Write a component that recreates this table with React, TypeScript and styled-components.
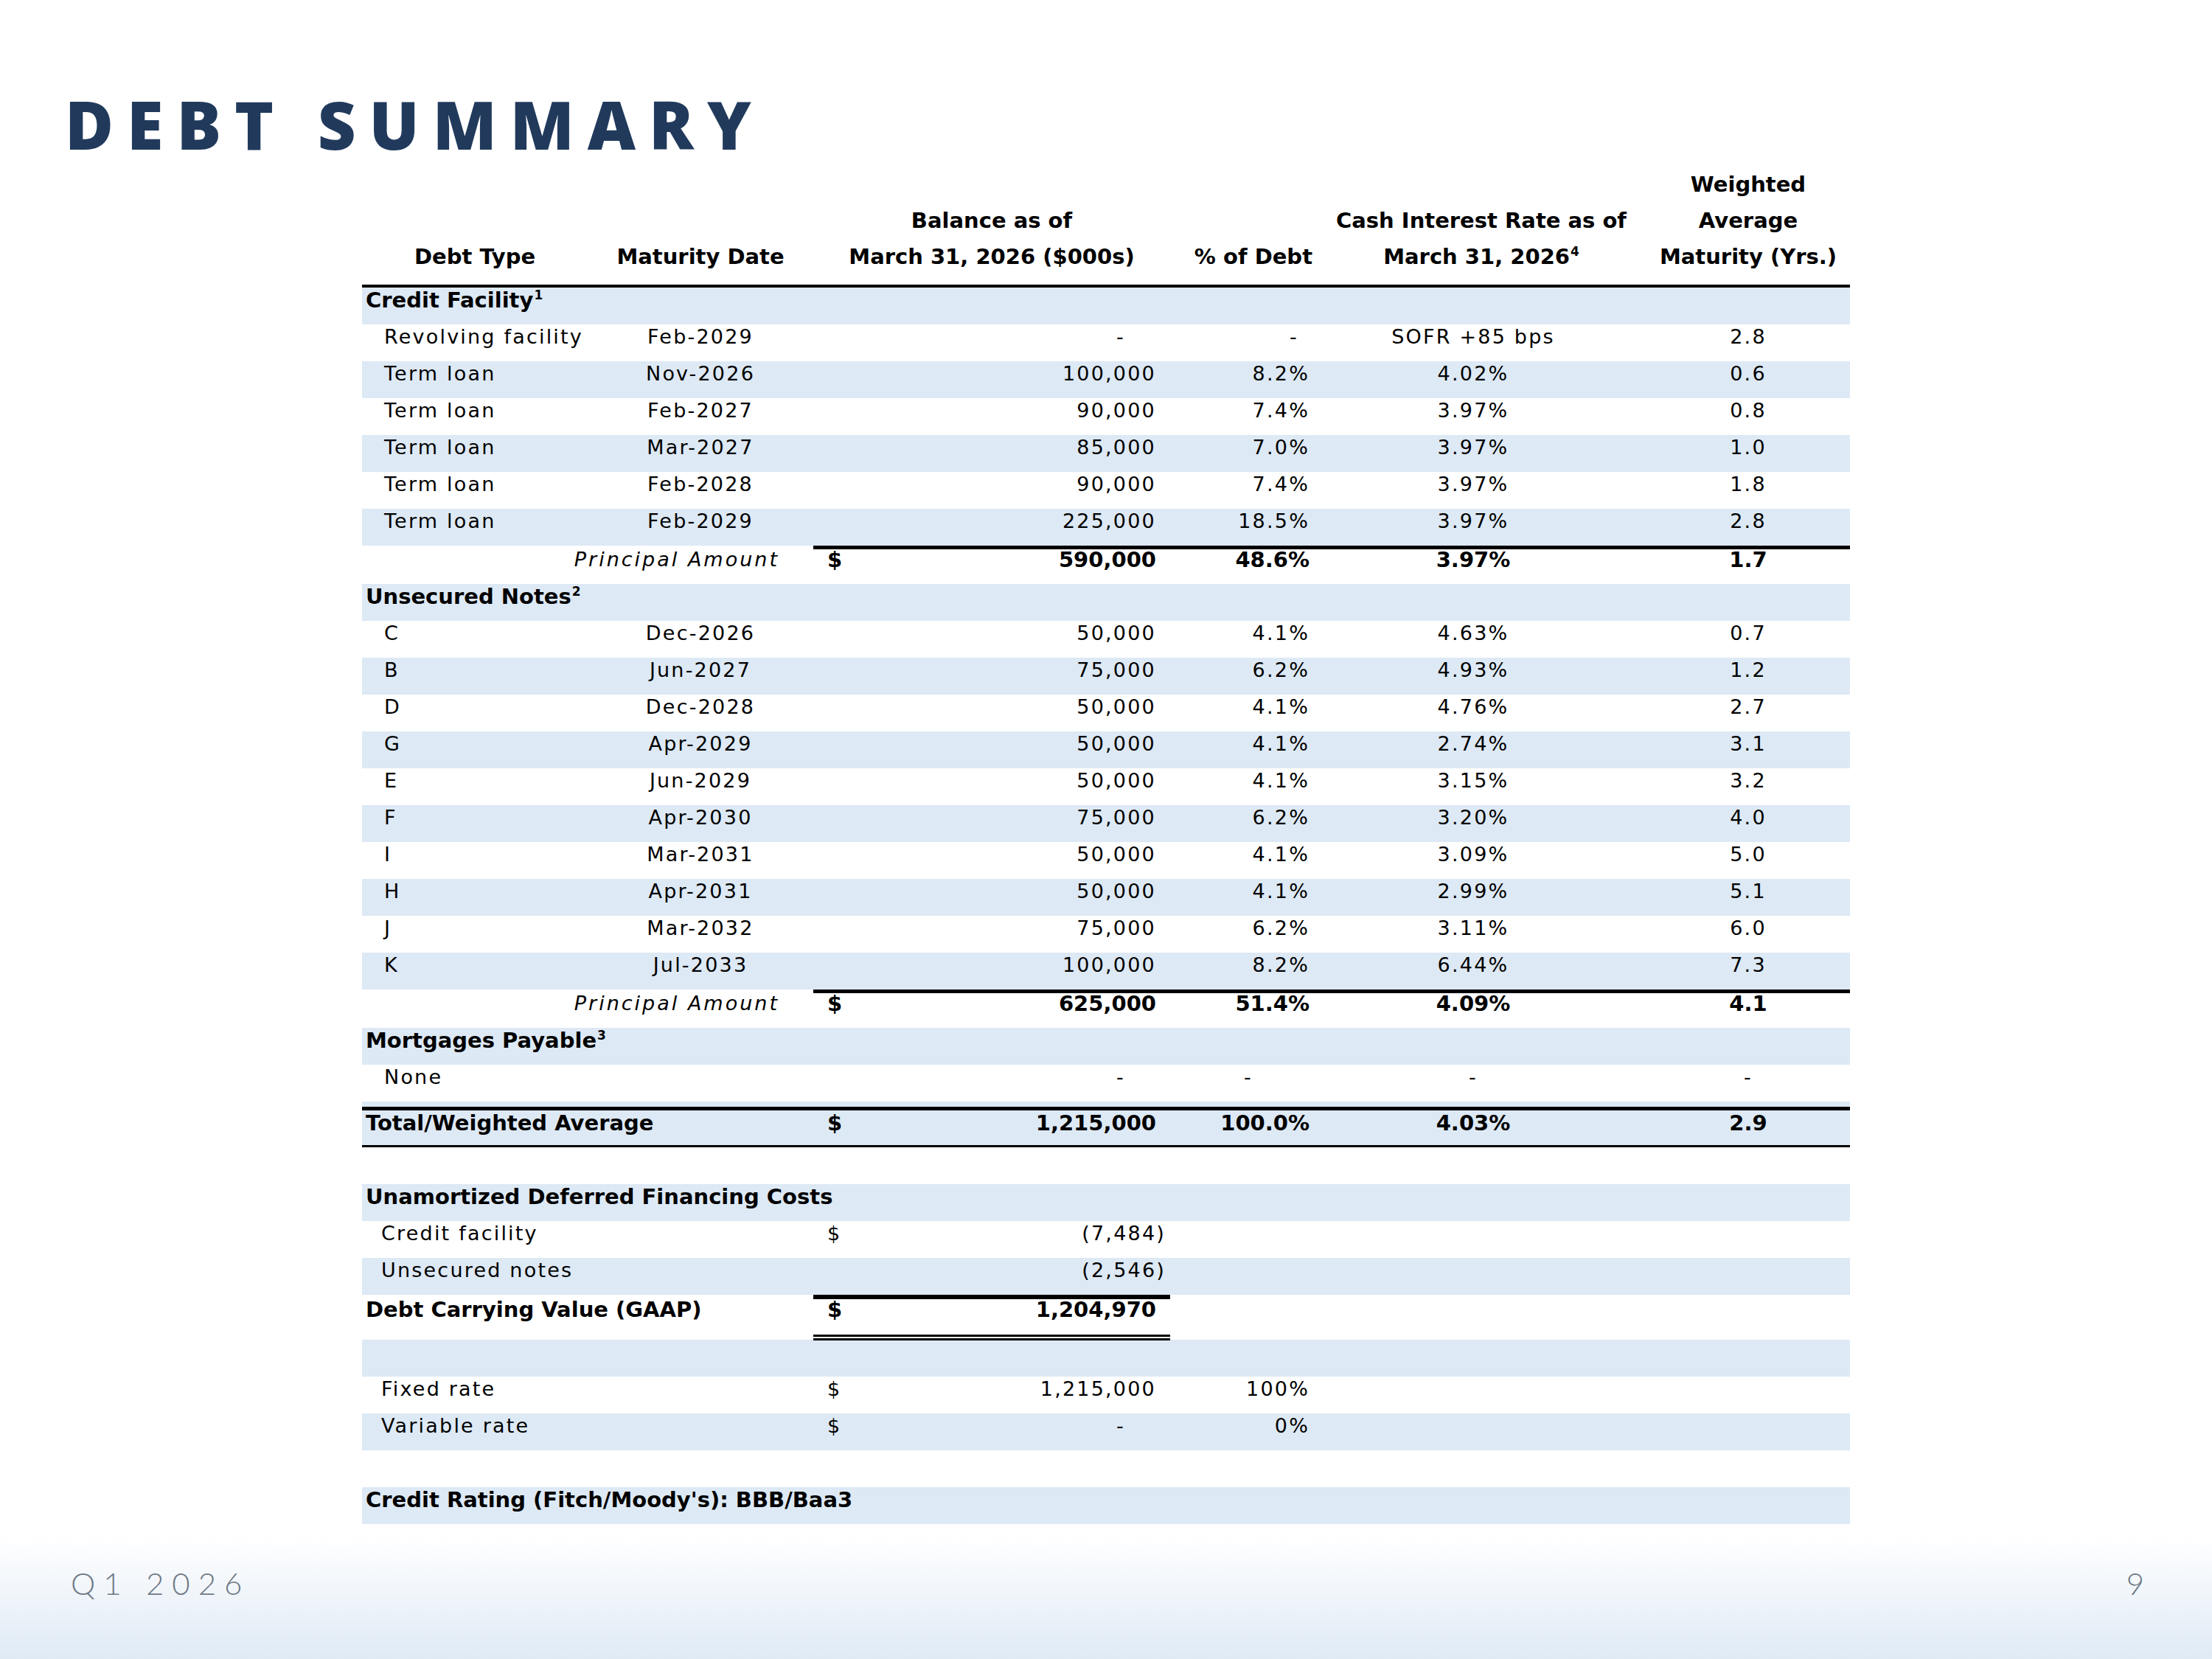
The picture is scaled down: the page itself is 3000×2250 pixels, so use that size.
import React, { FC, ReactElement, ReactNode } from 'react';
import styled, { createGlobalStyle, css } from 'styled-components';

const COLUMNS = '306px 306px 484px 212px 410px 300px';
const SHADE = '#dde9f5';

type Justify = 'flex-start' | 'center' | 'flex-end' | 'space-between';
type Rule = 'line' | 'ghost' | 'carry' | 'carryGhost';

interface DebtItem {
    label: string;
    date: string;
    balance: string;
    pct: string;
    rate: string;
    wam: string;
}

const creditFacility: DebtItem[] = [
    { label: 'Revolving facility', date: 'Feb-2029', balance: '-', pct: '-', rate: 'SOFR +85 bps', wam: '2.8' },
    { label: 'Term loan', date: 'Nov-2026', balance: '100,000', pct: '8.2%', rate: '4.02%', wam: '0.6' },
    { label: 'Term loan', date: 'Feb-2027', balance: '90,000', pct: '7.4%', rate: '3.97%', wam: '0.8' },
    { label: 'Term loan', date: 'Mar-2027', balance: '85,000', pct: '7.0%', rate: '3.97%', wam: '1.0' },
    { label: 'Term loan', date: 'Feb-2028', balance: '90,000', pct: '7.4%', rate: '3.97%', wam: '1.8' },
    { label: 'Term loan', date: 'Feb-2029', balance: '225,000', pct: '18.5%', rate: '3.97%', wam: '2.8' },
];

const unsecuredNotes: DebtItem[] = [
    { label: 'C', date: 'Dec-2026', balance: '50,000', pct: '4.1%', rate: '4.63%', wam: '0.7' },
    { label: 'B', date: 'Jun-2027', balance: '75,000', pct: '6.2%', rate: '4.93%', wam: '1.2' },
    { label: 'D', date: 'Dec-2028', balance: '50,000', pct: '4.1%', rate: '4.76%', wam: '2.7' },
    { label: 'G', date: 'Apr-2029', balance: '50,000', pct: '4.1%', rate: '2.74%', wam: '3.1' },
    { label: 'E', date: 'Jun-2029', balance: '50,000', pct: '4.1%', rate: '3.15%', wam: '3.2' },
    { label: 'F', date: 'Apr-2030', balance: '75,000', pct: '6.2%', rate: '3.20%', wam: '4.0' },
    { label: 'I', date: 'Mar-2031', balance: '50,000', pct: '4.1%', rate: '3.09%', wam: '5.0' },
    { label: 'H', date: 'Apr-2031', balance: '50,000', pct: '4.1%', rate: '2.99%', wam: '5.1' },
    { label: 'J', date: 'Mar-2032', balance: '75,000', pct: '6.2%', rate: '3.11%', wam: '6.0' },
    { label: 'K', date: 'Jul-2033', balance: '100,000', pct: '8.2%', rate: '6.44%', wam: '7.3' },
];

const GlobalStyle = createGlobalStyle`
    html, body {
        margin: 0;
        padding: 0;
        background: #ffffff;
    }

    * {
        box-sizing: border-box;
    }
`;

const Slide = styled.div`
    width: 3000px;
    height: 2250px;
    display: flex;
    flex-direction: column;
    background: #ffffff;
`;

const Title = styled.h1`
    margin: 0;
    padding: 123px 0 0 88px;
    font-family: 'Open Sans', 'Liberation Sans', sans-serif;
    font-weight: 800;
    font-size: 90px;
    line-height: 90px;
    letter-spacing: 18px;
    color: #213a5c;
`;

const Table = styled.div`
    width: 2018px;
    margin: 13px auto 0;
    font-family: 'DejaVu Sans', Verdana, sans-serif;
    color: #000000;
`;

const HeaderRow = styled.div`
    display: grid;
    grid-template-columns: ${COLUMNS};
    align-items: end;
    padding-bottom: 13px;
    border-bottom: 4px solid #000000;
`;

const HeadCell = styled.div<{ $align?: 'center' | 'right'; $padLeft?: number; $padRight?: number }>`
    text-align: ${({ $align }): string => $align ?? 'center'};
    padding-left: ${({ $padLeft }): number => $padLeft ?? 0}px;
    padding-right: ${({ $padRight }): number => $padRight ?? 0}px;
    font-weight: 700;
    font-size: 29px;
    line-height: 49px;
    white-space: nowrap;
`;

const Row = styled.div<{ $shaded?: boolean; $height?: number }>`
    display: grid;
    grid-template-columns: ${COLUMNS};
    height: ${({ $height }): number => $height ?? 50}px;
    background: ${({ $shaded }): string => ($shaded ? SHADE : '#ffffff')};
`;

const TotalBand = styled.div`
    background: ${SHADE};
    padding-top: 7px;

    ${Row} {
        border-top: 5px solid #000000;
        border-bottom: 3px solid #000000;
    }
`;

const rules: Record<Rule, ReturnType<typeof css>> = {
    line: css`
        border-top: 5px solid #000000;
    `,
    ghost: css`
        border-top: 5px solid transparent;
    `,
    carry: css`
        border-top: 6px solid #000000;
        border-bottom: 8px double #000000;
    `,
    carryGhost: css`
        border-top: 6px solid transparent;
        border-bottom: 8px solid transparent;
    `,
};

const Cell = styled.div<{
    $span?: number;
    $justify?: Justify;
    $bold?: boolean;
    $italic?: boolean;
    $padLeft?: number;
    $padRight?: number;
    $lift?: number;
    $rule?: Rule;
}>`
    grid-column: span ${({ $span }): number => $span ?? 1};
    display: flex;
    align-items: center;
    justify-content: ${({ $justify }): string => $justify ?? 'flex-start'};
    padding: 0 ${({ $padRight }): number => $padRight ?? 0}px ${({ $lift }): number => $lift ?? 16}px
        ${({ $padLeft }): number => $padLeft ?? 0}px;
    font-size: ${({ $bold }): number => ($bold ? 29 : 27)}px;
    line-height: 28px;
    font-weight: ${({ $bold }): number => ($bold ? 700 : 400)};
    font-style: ${({ $italic }): string => ($italic ? 'italic' : 'normal')};
    letter-spacing: ${({ $bold, $italic }): number => ($bold ? 0 : $italic ? 3 : 2.2)}px;
    white-space: nowrap;
    ${({ $rule }) => ($rule ? rules[$rule] : '')}
`;

const Sup = styled.sup`
    position: relative;
    top: -11px;
    font-size: 17px;
    line-height: 0;
    vertical-align: baseline;
    margin-left: 1px;
`;

const Footer = styled.footer`
    margin-top: auto;
    height: 165px;
    padding: 41px 92px 0 96px;
    display: flex;
    justify-content: space-between;
    align-items: flex-start;
    background: linear-gradient(180deg, #ffffff 0%, #dfeaf5 100%);
    font-family: Lato, 'Open Sans', sans-serif;
    font-weight: 300;
    font-size: 42px;
    line-height: 42px;
    color: #6f7985;
`;

const Period = styled.span`
    letter-spacing: 11px;
`;

const balancePad = (value: string): number => {
    if (value === '-') return 61;
    if (value.startsWith('(')) return 6;
    return 19;
};

const Money: FC<{ value: string; dollar?: boolean; bold?: boolean; rule?: Rule; lift?: number }> = ({
    value,
    dollar,
    bold,
    rule,
    lift,
}): ReactElement => (
    <Cell $justify="space-between" $padLeft={19} $padRight={balancePad(value)} $bold={bold} $rule={rule} $lift={lift}>
        <span>{dollar ? '$' : ''}</span>
        <span>{value}</span>
    </Cell>
);

const Section: FC<{ shaded: boolean; children: ReactNode }> = ({ shaded, children }): ReactElement => (
    <Row $shaded={shaded}>
        <Cell $span={6} $bold $padLeft={5}>
            <span>{children}</span>
        </Cell>
    </Row>
);

const ItemRow: FC<{ item: DebtItem; shaded: boolean }> = ({ item, shaded }): ReactElement => (
    <Row $shaded={shaded}>
        <Cell $padLeft={30}>{item.label}</Cell>
        <Cell $justify="center">{item.date}</Cell>
        <Money value={item.balance} />
        <Cell $justify="flex-end" $padRight={item.pct === '-' ? 38 : 23}>
            {item.pct}
        </Cell>
        <Cell $justify="center" $padRight={12}>
            {item.rate}
        </Cell>
        <Cell $justify="center" $padLeft={24}>
            {item.wam}
        </Cell>
    </Row>
);

// subtotal rows: rule over the number columns, text sits high under the rule
const PrincipalRow: FC<{ balance: string; pct: string; rate: string; wam: string }> = ({
    balance,
    pct,
    rate,
    wam,
}): ReactElement => (
    <Row $height={52}>
        <Cell $span={2} $justify="flex-end" $padRight={46} $italic $rule="ghost" $lift={19}>
            Principal Amount
        </Cell>
        <Money value={balance} dollar bold rule="line" lift={19} />
        <Cell $justify="flex-end" $padRight={23} $bold $rule="line" $lift={19}>
            {pct}
        </Cell>
        <Cell $justify="center" $padRight={12} $bold $rule="line" $lift={19}>
            {rate}
        </Cell>
        <Cell $justify="center" $padLeft={24} $bold $rule="line" $lift={19}>
            {wam}
        </Cell>
    </Row>
);

const SubRow: FC<{ label: string; shaded: boolean; value: string; dollar?: boolean; pct?: string }> = ({
    label,
    shaded,
    value,
    dollar,
    pct,
}): ReactElement => (
    <Row $shaded={shaded}>
        <Cell $span={2} $padLeft={26}>
            {label}
        </Cell>
        <Money value={value} dollar={dollar} />
        <Cell $justify="flex-end" $padRight={23}>
            {pct}
        </Cell>
    </Row>
);

const App: FC = (): ReactElement => (
    <>
        <GlobalStyle />
        <Slide>
            <Title>DEBT SUMMARY</Title>
            <Table>
                <HeaderRow>
                    <HeadCell>Debt Type</HeadCell>
                    <HeadCell>Maturity Date</HeadCell>
                    <HeadCell>
                        Balance as of
                        <br />
                        March 31, 2026 ($000s)
                    </HeadCell>
                    <HeadCell $align="right" $padRight={19}>
                        % of Debt
                    </HeadCell>
                    <HeadCell $padLeft={10}>
                        Cash Interest Rate as of
                        <br />
                        March 31, 2026<Sup>4</Sup>
                    </HeadCell>
                    <HeadCell $padLeft={24}>
                        Weighted
                        <br />
                        Average
                        <br />
                        Maturity (Yrs.)
                    </HeadCell>
                </HeaderRow>

                <Section shaded>
                    Credit Facility<Sup>1</Sup>
                </Section>
                {creditFacility.map((item, i) => (
                    <ItemRow key={`cf-${item.date}-${i}`} item={item} shaded={i % 2 === 1} />
                ))}
                <PrincipalRow balance="590,000" pct="48.6%" rate="3.97%" wam="1.7" />

                <Section shaded>
                    Unsecured Notes<Sup>2</Sup>
                </Section>
                {unsecuredNotes.map((item, i) => (
                    <ItemRow key={`un-${item.label}`} item={item} shaded={i % 2 === 1} />
                ))}
                <PrincipalRow balance="625,000" pct="51.4%" rate="4.09%" wam="4.1" />

                <Section shaded>
                    Mortgages Payable<Sup>3</Sup>
                </Section>
                <Row>
                    <Cell $span={2} $padLeft={30}>
                        None
                    </Cell>
                    <Money value="-" />
                    <Cell $justify="center">-</Cell>
                    <Cell $justify="center" $padRight={12}>
                        -
                    </Cell>
                    <Cell $justify="center" $padLeft={24}>
                        -
                    </Cell>
                </Row>

                <TotalBand>
                    <Row $shaded $height={55}>
                        <Cell $span={2} $bold $padLeft={5} $lift={14}>
                            Total/Weighted Average
                        </Cell>
                        <Money value="1,215,000" dollar bold lift={14} />
                        <Cell $justify="flex-end" $padRight={23} $bold $lift={14}>
                            100.0%
                        </Cell>
                        <Cell $justify="center" $padRight={12} $bold $lift={14}>
                            4.03%
                        </Cell>
                        <Cell $justify="center" $padLeft={24} $bold $lift={14}>
                            2.9
                        </Cell>
                    </Row>
                </TotalBand>
                <Row />

                <Section shaded>Unamortized Deferred Financing Costs</Section>
                <SubRow label="Credit facility" shaded={false} value="(7,484)" dollar />
                <SubRow label="Unsecured notes" shaded value="(2,546)" />
                <Row $height={61}>
                    <Cell $span={2} $bold $padLeft={5} $rule="carryGhost" $lift={20}>
                        Debt Carrying Value (GAAP)
                    </Cell>
                    <Money value="1,204,970" dollar bold rule="carry" lift={20} />
                </Row>
                <Row $shaded />
                <SubRow label="Fixed rate" shaded={false} value="1,215,000" dollar pct="100%" />
                <SubRow label="Variable rate" shaded value="-" dollar pct="0%" />
                <Row />
                <Section shaded>Credit Rating (Fitch/Moody&apos;s): BBB/Baa3</Section>
            </Table>
            <Footer>
                <Period>Q1 2026</Period>
                <span>9</span>
            </Footer>
        </Slide>
    </>
);

export default App;
